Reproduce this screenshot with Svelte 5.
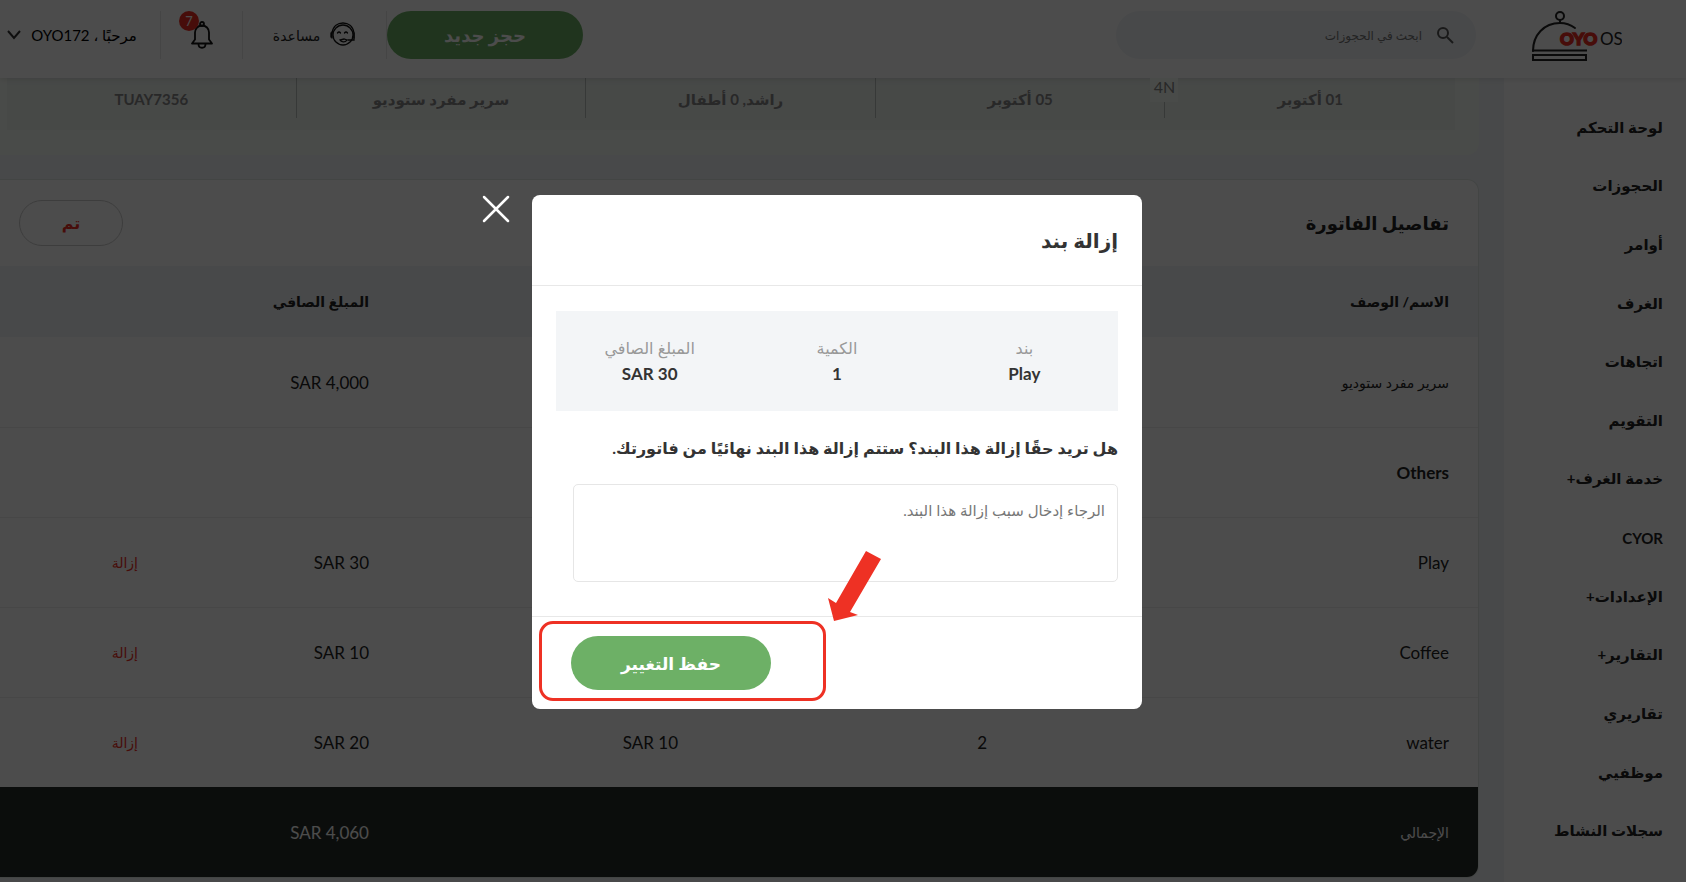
<script lang="ts">
    type Row = { name: string; qty?: string; price?: string; net?: string; latin?: boolean; strong?: boolean; removable?: boolean };

    const menu = [
        'لوحة التحكم',
        'الحجوزات',
        'أوامر',
        'الغرف',
        'اتجاهات',
        'التقويم',
        'خدمة الغرف+',
        'CYOR',
        'الإعدادات+',
        'التقارير+',
        'تقاريري',
        'موظفيي',
        'سجلات النشاط'
    ];

    const booking = ['01 أكتوبر', '05 أكتوبر', 'راشد, 0 أطفال', 'سرير مفرد ستوديو', 'TUAY7356'];

    const rows: Row[] = [
        { name: 'سرير مفرد ستوديو', net: 'SAR 4,000' },
        { name: 'Others', latin: true, strong: true },
        { name: 'Play', latin: true, net: 'SAR 30', removable: true },
        { name: 'Coffee', latin: true, net: 'SAR 10', removable: true },
        { name: 'water', latin: true, qty: '2', price: 'SAR 10', net: 'SAR 20', removable: true }
    ];

    const item = [
        { label: 'بند', value: 'Play' },
        { label: 'الكمية', value: '1' },
        { label: 'المبلغ الصافي', value: 'SAR 30' }
    ];

    let reason = $state('');
    let search = $state('');
    let open = $state(true);

    function closeModal() {
        open = false;
    }
</script>

<div class="app" dir="rtl" lang="ar">
    <header class="topbar">
        <a class="logo" href="/" aria-label="OYO OS">
            <svg width="90" height="52" viewBox="0 0 90 52" direction="ltr">
                <g fill="none" stroke="#222" stroke-width="2">
                    <circle cx="28" cy="5" r="4" />
                    <path d="M28 9v3" />
                    <path d="M1 40C1 24 12 12 28 12c6 0 11 2 15 5" stroke-linecap="round" />
                    <path d="M0 39.500h55" />
                    <path d="M1 44h53v5H1z" />
                </g>
                <text class="brand" x="28" y="34">OYO</text>
                <text class="os" x="68" y="34">OS</text>
            </svg>
        </a>

        <label class="search">
            <svg width="18" height="18" viewBox="0 0 18 18" fill="none" stroke="#555" stroke-width="2">
                <circle cx="7" cy="7" r="5" />
                <path d="M11 11l6 6" />
            </svg>
            <input type="text" placeholder="ابحث في الحجوزات" aria-label="ابحث في الحجوزات" bind:value={search} />
        </label>

        <button class="new-booking">حجز جديد</button>

        <a class="help" href="/help">
            <svg width="26" height="26" viewBox="0 0 26 26" fill="none" stroke="#111" stroke-width="1.3" stroke-linecap="round">
                <circle cx="13" cy="13" r="10" />
                <path d="M2 11C3 4 8 1 13 1s10 3 11 10v7h-6" />
                <path d="M1 11v4M2 10v6M24 11v5" />
                <path d="M7.500 11q1.500-2 3 0M14.500 11q1.500-2 3 0" />
                <path d="M10 18c1 2 5 3 7 0l-3-1z" />
            </svg>
            <span>مساعدة</span>
        </a>

        <button class="bell" aria-label="7">
            <svg width="22" height="28" viewBox="0 0 22 28" fill="none" stroke="#111" stroke-width="1.800" stroke-linejoin="round">
                <circle cx="11" cy="3" r="2" />
                <path d="M1 22.500h20l-3-4v-7c0-4-3-7-7-7s-7 3-7 7v7z" />
                <path d="M7.500 23c0 5 7 5 7 0" />
            </svg>
            <span class="badge">7</span>
        </button>

        <button class="user">
            <span>مرحبًا ، OYO172</span>
            <svg width="14" height="10" viewBox="0 0 14 10" fill="none" stroke="#333" stroke-width="2">
                <path d="M1 1l6 7 6-7" />
            </svg>
        </button>
    </header>

    <div class="body">
        <nav class="sidebar">
            {#each menu as entry}
                <a href="/">{entry}</a>
            {/each}
        </nav>

        <main>
            <section class="booking">
                <div class="booking-strip">
                    {#each booking as cell, i}
                        <div class="booking-cell">
                            {cell}
                            {#if i === 0}<span class="nights">4N</span>{/if}
                        </div>
                    {/each}
                </div>
            </section>

            <section class="invoice">
                <div class="invoice-head">
                    <h2>تفاصيل الفاتورة</h2>
                    <button class="done">تم</button>
                </div>
                <table>
                    <colgroup>
                        <col />
                        <col class="c-amount" />
                        <col class="c-amount" />
                        <col class="c-net" />
                        <col class="c-action" />
                    </colgroup>
                    <thead>
                        <tr>
                            <th>الاسم/ الوصف</th>
                            <th></th>
                            <th></th>
                            <th>المبلغ الصافي</th>
                            <th></th>
                        </tr>
                    </thead>
                    <tbody>
                        {#each rows as row}
                            <tr>
                                <td class:latin={row.latin} class:strong={row.strong}>{row.name}</td>
                                <td class="latin">{row.qty ?? ''}</td>
                                <td class="latin">{row.price ?? ''}</td>
                                <td class="latin">{row.net ?? ''}</td>
                                <td>
                                    {#if row.removable}
                                        <button class="remove" onclick={() => (open = true)}>إزالة</button>
                                    {/if}
                                </td>
                            </tr>
                        {/each}
                    </tbody>
                    <tfoot>
                        <tr>
                            <td>الإجمالي</td>
                            <td></td>
                            <td></td>
                            <td class="latin">SAR 4,060</td>
                            <td></td>
                        </tr>
                    </tfoot>
                </table>
            </section>
        </main>
    </div>

    {#if open}
        <div class="overlay">
            <div class="modal" role="dialog" aria-modal="true" aria-labelledby="modal-title">
                <button class="close" aria-label="×" onclick={closeModal}>
                    <svg width="28" height="28" viewBox="0 0 28 28" stroke="#fff" stroke-width="2.500" stroke-linecap="round">
                        <path d="M2 2l24 24M26 2L2 26" />
                    </svg>
                </button>

                <div class="modal-head">
                    <h1 id="modal-title">إزالة بند</h1>
                </div>

                <div class="modal-body">
                    <dl class="item">
                        {#each item as field}
                            <div>
                                <dt>{field.label}</dt>
                                <dd>{field.value}</dd>
                            </div>
                        {/each}
                    </dl>
                    <label for="reason">هل تريد حقًا إزالة هذا البند؟ ستتم إزالة هذا البند نهائيًا من فاتورتك.</label>
                    <textarea id="reason" placeholder="الرجاء إدخال سبب إزالة هذا البند." bind:value={reason}></textarea>
                </div>

                <div class="modal-foot">
                    <button class="save">حفظ التغيير</button>
                    <div class="highlight"></div>
                    <svg class="arrow" width="54" height="72" viewBox="0 0 54 72" fill="#ee3124">
                        <path d="M38 1L53 9 22 62l8 3-24 6L0 48l8 5z" />
                    </svg>
                </div>
            </div>
        </div>
    {/if}
</div>

<style>
    :global(body) {
        margin: 0;
        overflow: hidden;
    }

    .app {
        position: relative;
        display: flex;
        flex-direction: column;
        height: 100vh;
        overflow: hidden;
        background: #f1f4f7;
        color: #222;
        font-family: Lato, "DejaVu Sans", sans-serif;
        font-size: 16px;
    }

    button,
    input,
    textarea {
        font-family: inherit;
        color: inherit;
    }

    button {
        padding: 0;
        border: 0;
        background: none;
        cursor: pointer;
    }

    a {
        color: inherit;
        text-decoration: none;
    }

    .topbar {
        position: relative;
        z-index: 1;
        display: flex;
        flex: none;
        align-items: flex-start;
        box-sizing: border-box;
        height: 78px;
        padding: 11px 64px 0 0;
        background: #fff;
        box-shadow: 0 1px 6px rgba(0, 0, 0, 0.12);
    }

    .logo {
        display: block;
        height: 52px;
    }

    .brand {
        fill: #ee2e24;
        stroke: #ee2e24;
        stroke-width: 1.5px;
        font-size: 17px;
        font-weight: 900;
    }

    .os {
        fill: #222;
        font-size: 17px;
    }

    .search {
        display: flex;
        align-items: center;
        gap: 14px;
        box-sizing: border-box;
        width: 360px;
        height: 48px;
        margin: 0 56px 0 auto;
        padding: 0 22px;
        border-radius: 24px;
        background: #f1f4f7;
    }

    .search input {
        flex: 1;
        min-width: 0;
        padding: 0;
        border: 0;
        outline: 0;
        background: none;
        font-size: 12px;
    }

    .search input::placeholder {
        color: #777;
        opacity: 1;
    }

    .new-booking {
        width: 196px;
        height: 48px;
        margin-right: auto;
        border-radius: 24px;
        background: #6db066;
        color: #fff;
        font-size: 18px;
        font-weight: 700;
    }

    .help,
    .bell,
    .user {
        display: flex;
        align-items: center;
        justify-content: center;
        box-sizing: border-box;
        height: 48px;
        border-right: 1px solid #e6e6e6;
    }

    .help {
        gap: 10px;
        width: 144px;
        font-size: 14px;
    }

    .bell {
        position: relative;
        width: 82px;
    }

    .badge {
        position: absolute;
        top: 0;
        left: 18px;
        width: 20px;
        border-radius: 10px;
        background: #ee2e24;
        color: #fff;
        font-size: 13px;
        line-height: 20px;
        text-align: center;
    }

    .user {
        gap: 10px;
        width: 161px;
        padding-right: 16px;
        font-size: 15px;
        color: #000;
    }

    .body {
        display: flex;
        flex: 1;
        min-height: 0;
    }

    .sidebar {
        display: flex;
        flex: none;
        flex-direction: column;
        box-sizing: border-box;
        width: 182px;
        padding: 20px 23px 22px;
        background: #fff;
    }

    .sidebar a {
        display: flex;
        flex: 1;
        align-items: center;
        font-size: 15px;
        font-weight: 700;
    }

    main {
        flex: 1;
        min-width: 0;
        padding-right: 25px;
    }

    .booking {
        padding: 0 24px 25px 7px;
        border-radius: 0 0 12px 0;
        background: #f6fbf5;
        color: #888;
    }

    .booking-strip {
        display: grid;
        grid-template-columns: repeat(5, 1fr);
        padding-bottom: 12px;
        background: #edf3ef;
    }

    .booking-cell {
        position: relative;
        height: 40px;
        font-size: 15px;
        font-weight: 700;
        line-height: 42px;
        text-align: center;
    }

    .booking-cell + .booking-cell {
        border-right: 1px solid #b9bfbc;
    }

    .nights {
        position: absolute;
        top: 0;
        left: -15px;
        z-index: 1;
        width: 28px;
        height: 24px;
        background: #f6fbf5;
        font-size: 16px;
        font-weight: 400;
        line-height: 18px;
    }

    .invoice {
        margin-top: 24px;
        border: 1px solid #dfe6e3;
        border-left: 0;
        border-radius: 0 12px 12px 0;
        background: #fff;
        overflow: hidden;
    }

    .invoice-head {
        display: flex;
        align-items: center;
        justify-content: space-between;
        height: 86px;
        padding: 0 29px 0 19px;
    }

    h2 {
        margin: 0;
        font-size: 18px;
        font-weight: 700;
    }

    .done {
        width: 104px;
        height: 46px;
        border: 1px solid #ccc;
        border-radius: 23px;
        color: #ee2e24;
        font-size: 16px;
        font-weight: 700;
    }

    table {
        width: 100%;
        border-spacing: 0;
        table-layout: fixed;
    }

    .c-amount {
        width: 309px;
    }

    .c-net {
        width: 231px;
    }

    .c-action {
        width: 167px;
    }

    th,
    td {
        box-sizing: border-box;
        padding: 0 29px 0 0;
        text-align: right;
    }

    th {
        height: 71px;
        background: #f1f4f7;
        font-size: 14px;
        font-weight: 700;
    }

    td {
        height: 90px;
        font-size: 14px;
    }

    tbody tr + tr td {
        border-top: 1px solid #eee;
    }

    .latin {
        font-size: 17px;
    }

    .strong {
        font-weight: 700;
    }

    .remove {
        color: #ee2e24;
        font-size: 14px;
    }

    tfoot td {
        background: #272d2b;
        color: #fff;
    }

    .overlay {
        position: absolute;
        inset: 0;
        z-index: 2;
        display: flex;
        align-items: flex-start;
        justify-content: center;
        padding: 195px 12px 0 0;
        background: rgba(0, 0, 0, 0.7);
    }

    .modal {
        position: relative;
        width: 610px;
        border-radius: 8px;
        background: #fff;
        color: #333;
    }

    .close {
        position: absolute;
        top: 0;
        left: -50px;
        height: 28px;
    }

    .modal-head {
        display: flex;
        align-items: center;
        height: 90px;
        padding: 0 24px;
        border-bottom: 1px solid #e8e8e8;
    }

    h1 {
        margin: 0;
        font-size: 20px;
        font-weight: 700;
    }

    .modal-body {
        padding: 25px 24px 34px;
    }

    .item {
        display: grid;
        grid-template-columns: repeat(3, 1fr);
        align-content: center;
        height: 100px;
        margin: 0;
        background: #f3f5f7;
        line-height: 26px;
        text-align: center;
    }

    dt {
        color: #999;
        font-size: 16px;
    }

    dd {
        margin: 0;
        font-size: 17px;
        font-weight: 700;
    }

    .modal-body label {
        display: block;
        padding: 24px 0;
        font-size: 16px;
        font-weight: 700;
        line-height: 25px;
        white-space: nowrap;
    }

    textarea {
        display: block;
        box-sizing: border-box;
        width: calc(100% - 17px);
        height: 98px;
        padding: 13px 12px;
        border: 1px solid #e6e6e6;
        border-radius: 5px;
        outline: 0;
        font-size: 15px;
        line-height: 24px;
        resize: none;
    }

    textarea::placeholder {
        color: #777;
        opacity: 1;
    }

    .modal-foot {
        position: relative;
        display: flex;
        justify-content: flex-end;
        padding: 19px 39px;
        border-top: 1px solid #e8e8e8;
    }

    .save {
        width: 200px;
        height: 54px;
        border-radius: 27px;
        background: #6db066;
        color: #fff;
        font-size: 17px;
        font-weight: 700;
    }

    .highlight {
        position: absolute;
        top: 4px;
        left: 7px;
        box-sizing: border-box;
        width: 287px;
        height: 80px;
        border: 3px solid #ee3124;
        border-radius: 14px;
        pointer-events: none;
    }

    .arrow {
        position: absolute;
        top: -67px;
        left: 296px;
        pointer-events: none;
    }
</style>
